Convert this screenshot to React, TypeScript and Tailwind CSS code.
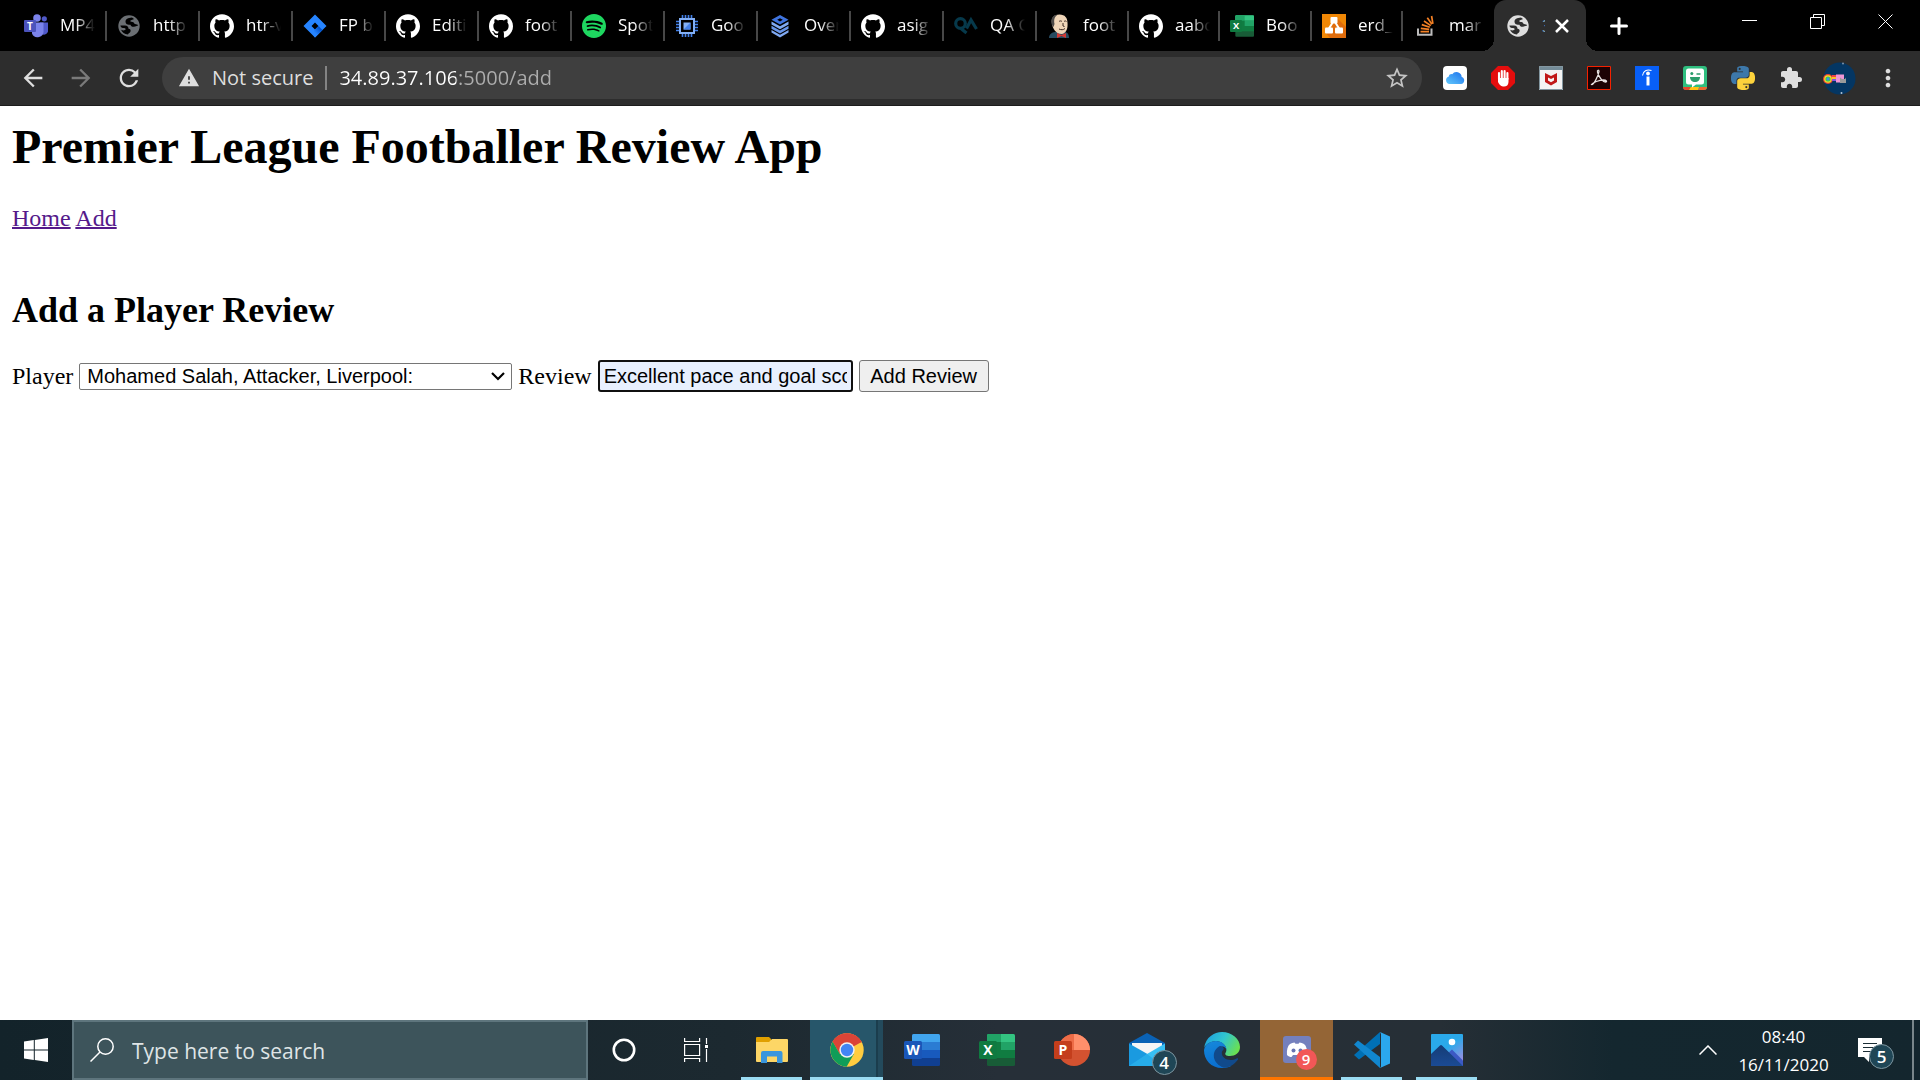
import type { ReactNode } from 'react';
import { SiGithub, SiSpotify } from 'react-icons/si';
import { MdArrowBack, MdArrowForward, MdExtension, MdMoreVert, MdRefresh, MdStarBorder, MdWarning } from 'react-icons/md';

/* ---------- favicons ---------- */

const Teams = () => (
  <svg viewBox="0 0 24 24" className="size-6">
    <circle cx="13" cy="4" r="3.8" fill="#7b83eb" />
    <circle cx="20.3" cy="4.8" r="2.6" fill="#5059c9" />
    <path d="M16 8.500h8v7a4 4 0 0 1-8 2z" fill="#5059c9" />
    <path d="M8 8.500h11.500v8a6 6 0 0 1-11.500 3z" fill="#7b83eb" />
    <rect y="6" width="12" height="12" rx="1" fill="#4b53bc" />
    <text x="6" y="15.500" textAnchor="middle" fontSize="10" fontWeight="700" fill="#fff" fontFamily="Open Sans, sans-serif">T</text>
  </svg>
);

const Jira = () => (
  <svg viewBox="0 0 24 24" className="size-6">
    <defs>
      <linearGradient id="jira" x1="0.9" y1="0.2" x2="0.4" y2="0.8">
        <stop offset="0.2" stopColor="#0052cc" />
        <stop offset="1" stopColor="#2684ff" />
      </linearGradient>
    </defs>
    <path d="M12 .5 23.500 12 12 23.500.5 12zM12 8.500 8.500 12l3.500 3.500 3.500-3.500z" fill="#2684ff" fillRule="evenodd" />
    <path d="M12 15.500 15.500 12l4 4L12 23.500c-2.500-3-2-6 0-8z" fill="url(#jira)" />
  </svg>
);

const Chip = () => (
  <svg viewBox="0 0 24 24" className="size-6" fill="none">
    <path d="M7.500 1v4M10.500 1v4M13.500 1v4M16.500 1v4M7.500 19v4M10.500 19v4M13.500 19v4M16.500 19v4M1 7.500h4M1 10.500h4M1 13.500h4M1 16.500h4M19 7.500h4M19 10.500h4M19 13.500h4M19 16.500h4" stroke="#4280ea" strokeWidth="1.600" />
    <rect x="5" y="5" width="14" height="14" stroke="#82aff5" strokeWidth="2" />
    <path d="M8.500 8.500h7v7h-7z" fill="#82aff5" />
    <path d="M15.500 8.500v7h-7z" fill="#4280ea" />
  </svg>
);

const Stack = () => (
  <svg viewBox="0 0 24 24" className="size-6">
    <path d="m12 1 8.500 4.700L12 10.500 3.500 5.700zM12 4.200 9.200 5.700 12 7.400l2.800-1.700z" fill="#3f74df" fillRule="evenodd" />
    <path d="m3.500 7.500 8.500 4.700 8.500-4.700v3L12 15.300l-8.500-4.800z" fill="#7fa9f3" />
    <path d="m3.500 11.800 8.500 4.700 8.500-4.700v3L12 19.600l-8.500-4.800z" fill="#6795ea" />
    <path d="m3.500 16 8.500 4.700L20.500 16v2.500L12 23.500l-8.500-5z" fill="#7fa9f3" />
  </svg>
);

const Qa = () => (
  <svg viewBox="0 0 24 24" className="size-6" fill="none" stroke="#06394b" strokeWidth="3.200">
    <circle cx="6.500" cy="9.500" r="4.800" />
    <path d="m7.500 15 5 4M12.500 14.500 17 6l5.500 9" />
  </svg>
);

const Jenkins = () => (
  <svg viewBox="0 0 24 24" className="size-6">
    <path d="M2 24c0-4 3-5.500 6-6l10 0c3 .5 4 3 4 6z" fill="#274b60" />
    <path d="M5 9C4 4 7 .5 12.500.5S20.500 4 20.500 9c.5 5-1 10-5.500 11C9 20 5.500 15 5 9z" fill="#efd5b8" />
    <path d="M5 11C2.500 5 6.500.5 11 .4 8 2 6.500 5 7.500 10l-1 3z" fill="#4d4a48" />
    <path d="M12 7.500c1-.8 2-.8 3 0M17 7.500c1-.7 2-.7 2.500 0M12 15c2 1 4.500 1 6-.5M16 9v3l1.500.5" stroke="#3c2a22" strokeWidth="1" fill="none" />
    <path d="m10 19 4.500 2L19 19v5l-4.500-2L10 24z" fill="#d33833" />
  </svg>
);

const Drawio = () => (
  <svg viewBox="0 0 24 24" className="size-6">
    <path d="M0 0h24v24H0z" fill="#f08705" />
    <path d="M15 4 24 13v11H8l-4-5z" fill="#df6c0c" />
    <path d="m11 8-5 8M13 8l5 8" stroke="#fff" strokeWidth="2" />
    <rect x="8.500" y="3" width="7" height="6.500" rx="1" fill="#fff" />
    <rect x="3" y="13.500" width="8" height="6" rx="1" fill="#fff" />
    <rect x="13" y="13.500" width="8" height="6" rx="1" fill="#fff" />
  </svg>
);

const StackOverflow = () => (
  <svg viewBox="0 0 24 24" className="size-6" fill="none">
    <path d="M5 14.500v6.300h13.500v-6.300" stroke="#bcbbbb" strokeWidth="2" />
    <path d="M7.500 17.700H16M7.800 14.300l8.400 1M8.800 10.600l8 2.600M11 7l6.800 4.600M14.300 3.700l4.600 6.500M18.600 2l1.300 7.800" stroke="#f48024" strokeWidth="1.700" />
  </svg>
);

const Globe = ({ light = false }: { light?: boolean }) => (
  <svg viewBox="0 0 24 24" className={light ? 'size-6 text-[#dedede]' : 'size-6 text-[#6b6f73]'}>
    <circle cx="12" cy="12" r="10.700" fill="currentColor" />
    <g fill={light ? '#2d2d2d' : '#000'}>
      <path d="M15 3.600c-4 .2-6.500 1.700-6.500 4.200 0 2 1.500 3 3.500 3h1.500c.5 1.700 1.500 2.200 3.500 2 1.500-.2 2.500-1 4.200-1.300-.3-1.300-2-1-3.200-1.500-1.200-.6-1-1.800-2.500-2-1.700-.2-2.700-.3-2-1.400.6-1 2.500-.8 3.500-1.700z" />
      <path d="M3.400 11.500H8c2.500 0 3.500 1.500 3.500 3.300 1.500.2 2.500 1 2 2.700-.5 1.500-2 1.500-2.500 3-3.500-.3-6-2-6.900-4.700 1.700.8 3.900 1 4.400-.2.500-1.300-1-1.600-2.500-1.600-1.500 0-2.400-1-2.600-2.500z" />
    </g>
  </svg>
);

const Office = ({ letter, className }: { letter: 'W' | 'X'; className: string }) => {
  const c =
    letter === 'W'
      ? ['#41a5ee', '#2b7cd3', '#185abd', '#103f91', '#1a56b8']
      : ['#33c481', '#21a366', '#107c41', '#185c37', '#0f7a40'];
  return (
    <svg viewBox="0 0 36 36" className={className}>
      <rect x="8" y="2" width="28" height="32" rx="1.500" fill={c[3]} />
      <path d="M8 3.500A1.500 1.500 0 0 1 9.500 2h25A1.500 1.500 0 0 1 36 3.500V10H8z" fill={c[0]} />
      <path d="M8 10h28v8H8z" fill={c[1]} />
      <path d="M8 18h28v8H8z" fill={c[2]} />
      {letter === 'X' && <path d="M8 3.500A1.500 1.500 0 0 1 9.500 2H22v8H8z" fill={c[1]} />}
      {letter === 'X' && <path d="M8 10h14v8H8z" fill={c[2]} />}
      <rect y="9" width="18" height="18" rx="1.500" fill={c[4]} />
      <text x="9" y="23" textAnchor="middle" fontSize="14" fontWeight="700" fill="#fff" fontFamily="Open Sans, sans-serif">{letter}</text>
    </svg>
  );
};

const gh = <SiGithub className="size-6 text-white" />;

const tabs: { title: string; icon: ReactNode; width: string }[] = [
  { title: 'MP4', icon: <Teams />, width: 'w-[93px]' },
  { title: 'http', icon: <Globe />, width: 'w-[93px]' },
  { title: 'htr-v', icon: gh, width: 'w-[93px]' },
  { title: 'FP b', icon: <Jira />, width: 'w-[93px]' },
  { title: 'Editi', icon: gh, width: 'w-[93px]' },
  { title: 'foot', icon: gh, width: 'w-[93px]' },
  { title: 'Spot', icon: <SiSpotify className="size-6 text-[#1ed760]" />, width: 'w-[93px]' },
  { title: 'Goo', icon: <Chip />, width: 'w-[93px]' },
  { title: 'Over', icon: <Stack />, width: 'w-[93px]' },
  { title: 'asig', icon: gh, width: 'w-[93px]' },
  { title: 'QA C', icon: <Qa />, width: 'w-[93px]' },
  { title: 'foot', icon: <Jenkins />, width: 'w-[92px]' },
  { title: 'aabc', icon: gh, width: 'w-[91px]' },
  { title: 'Boo', icon: <Office letter="X" className="size-6" />, width: 'w-[92px]' },
  { title: 'erd_', icon: <Drawio />, width: 'w-[91px]' },
  { title: 'mar', icon: <StackOverflow />, width: 'w-[91px]' },
];

function TabStrip() {
  return (
    <div className="flex h-[51px] bg-black pl-[14px] text-white">
      {tabs.map((t, i) => (
        <div key={i} className={`${t.width} flex h-[51px] items-center`}>
          <button className="flex h-full min-w-0 flex-1 items-center gap-3 pl-2.5">
            <span className="shrink-0">{t.icon}</span>
            <span className="w-[35px] overflow-hidden whitespace-nowrap pb-0.5 text-left text-[17px] leading-6 [mask-image:linear-gradient(to_right,black_45%,transparent)]">
              {t.title}
            </span>
          </button>
          <span className={i === tabs.length - 1 ? 'w-0.5' : 'h-[30px] w-0.5 bg-[#474747]'} />
        </div>
      ))}
      <div className="relative flex h-[51px] w-[92px] items-center rounded-t-xl bg-[#2d2d2d] pl-3">
        <span className="absolute -left-3 bottom-0 size-3 bg-[radial-gradient(circle_at_0_0,#000_12px,#2d2d2d_12px)]" />
        <span className="absolute -right-3 bottom-0 size-3 bg-[radial-gradient(circle_at_100%_0,#000_12px,#2d2d2d_12px)]" />
        <Globe light />
        <span className="ml-3 w-[3px] overflow-hidden text-[17px] leading-6 text-[#8ab0c8]">3</span>
        <button aria-label="Close tab" className="ml-[9px]">
          <svg viewBox="0 0 16 16" className="size-4" stroke="#fff" strokeWidth="2.500">
            <path d="m2 2 12 12M14 2 2 14" />
          </svg>
        </button>
      </div>
      <button aria-label="New tab" className="ml-6 flex items-center">
        <svg viewBox="0 0 18 18" className="size-[18px]" stroke="#fff" strokeWidth="3" strokeLinecap="round">
          <path d="M9 1.500v15M1.500 9h15" />
        </svg>
      </button>
      <div className="ml-auto flex h-[43px] pr-px">
        <button aria-label="Minimise" className="flex w-[68px] items-center justify-center">
          <svg viewBox="0 0 15 15" className="size-[15px]" stroke="#fff"><path d="M0 6.500h15" /></svg>
        </button>
        <button aria-label="Restore" className="flex w-[68px] items-center justify-center">
          <svg viewBox="0 0 15 15" className="size-[15px]" stroke="#fff" fill="none">
            <path d="M.5 3.500h11v11H.5zM3.500 3.500v-3h11v11h-3" />
          </svg>
        </button>
        <button aria-label="Close" className="flex w-[68px] items-center justify-center">
          <svg viewBox="0 0 15 15" className="size-[15px]" stroke="#fff"><path d="m.5.5 14 14M14.500.5l-14 14" /></svg>
        </button>
      </div>
    </div>
  );
}

/* ---------- extensions ---------- */

const extensions: { name: string; icon: ReactNode }[] = [
  {
    name: 'iCloud',
    icon: (
      <>
        <defs>
          <linearGradient id="cloud" x1="1" x2="0" y1="0" y2="1">
            <stop offset="0.2" stopColor="#2a83f0" />
            <stop offset="1" stopColor="#62c8fb" />
          </linearGradient>
        </defs>
        <rect width="24" height="24" rx="4" fill="#fff" />
        <path d="M6.500 18a3.700 3.700 0 0 1-.9-7.200 3 3 0 0 1 3.600-2.600 5.300 5.300 0 0 1 9.500 2.800 3.600 3.600 0 0 1-.7 7z" fill="url(#cloud)" />
      </>
    ),
  },
  {
    name: 'AdBlock',
    icon: (
      <>
        <path d="M7 0h10l7 7v10l-7 7H7l-7-7V7z" fill="#e40d0d" />
        <path d="M8 7v6M10.800 5v7M13.600 5v7M16.400 7v6" stroke="#fff" strokeWidth="2.100" strokeLinecap="round" />
        <path d="M7 12h10.500v4c0 3-2 4.500-4.500 4.500-3 0-4-1-6-4.500z" fill="#fff" />
      </>
    ),
  },
  {
    name: 'McAfee WebAdvisor',
    icon: (
      <>
        <path d="M0 0h24v24H0z" fill="#f4f4f4" />
        <path d="M0 0h24v4H0z" fill="#748c98" />
        <path d="M.5.5h23v23H.5z" fill="none" stroke="#8397a1" />
        <path d="m6 7 6 3 6-3v9l-6 3.500L6 16zm3 4.500v3l3 1.700 3-1.700v-3L12 13z" fill="#c01818" fillRule="evenodd" />
      </>
    ),
  },
  {
    name: 'Adobe Acrobat',
    icon: (
      <>
        <path d="M.5.5h23v23H.5z" fill="#1d0204" stroke="#f52100" />
        <path d="M4.500 18.500c2 1 7-9 7.500-13 0-2-2-1.500-1.500.5 1 4.500 5 10 8 10 2 0 1-2-2-2-4 0-11 2.500-12 4.500z" fill="none" stroke="#e8e0e0" strokeWidth="1.300" />
      </>
    ),
  },
  {
    name: 'Indeed',
    icon: (
      <>
        <path d="M0 0h24v24H0z" fill="#085ff7" />
        <path d="M13 10.500v9" stroke="#fff" strokeWidth="3" />
        <circle cx="13" cy="7.500" r="1.900" fill="#fff" />
        <path d="M7.500 9.500c.5-4.500 4.500-6.500 9-5" fill="none" stroke="#fff" strokeWidth="1.100" />
      </>
    ),
  },
  {
    name: 'Bitmoji',
    icon: (
      <>
        <rect width="24" height="24" rx="3" fill="#2fbe7f" />
        <path d="M0 21h8l-2 3H3a3 3 0 0 1-3-3z" fill="#e8452c" />
        <path d="M8 21h8l-1 3H6z" fill="#ffc20e" />
        <path d="M17 21h7a3 3 0 0 1-3 3h-6z" fill="#ea6a32" />
        <path d="M5.500 2.500h13a2.500 2.500 0 0 1 2.500 2.500v11a2.500 2.500 0 0 1-2.500 2.500H13l-4 3v-3H5.500A2.500 2.500 0 0 1 3 16V5a2.500 2.500 0 0 1 2.500-2.500z" fill="#fff" />
        <path d="M7 11h10c0 3-2 5-5 5s-5-2-5-5z" fill="#2a9d6c" />
        <circle cx="8.800" cy="7.500" r="1.500" fill="#2a9d6c" />
        <path d="M13.500 8h4" stroke="#2a9d6c" strokeWidth="1.500" />
      </>
    ),
  },
  {
    name: 'Python',
    icon: (
      <>
        <path fill="#3d78aa" fillRule="evenodd" d="M14.250.18l.9.2.73.26.59.3.45.32.34.34.25.34.16.33.1.3.04.26.02.2-.01.13V8.500l-.05.63-.13.55-.21.46-.26.38-.3.31-.33.25-.35.19-.35.14-.33.1-.3.07-.26.04-.21.02H8.770l-.69.05-.59.14-.5.22-.41.27-.33.32-.27.35-.2.36-.15.37-.1.35-.07.32-.04.27-.02.21v3.060H3.170l-.21-.03-.28-.07-.32-.12-.35-.18-.36-.26-.36-.36-.35-.46-.32-.59-.28-.73-.21-.88-.14-1.050-.05-1.230.06-1.220.16-1.040.24-.87.32-.71.36-.57.4-.44.42-.33.42-.24.4-.16.36-.1.32-.05.24-.01h.16l.06.01h8.160v-.83H6.180l-.01-2.750-.02-.37.05-.34.11-.31.17-.28.25-.26.31-.23.38-.2.44-.18.51-.15.58-.12.64-.1.71-.06.77-.04.84-.02 1.270.05zm-6.300 1.980l-.23.33-.08.41.08.41.23.34.33.22.41.09.41-.09.33-.22.23-.34.08-.41-.08-.41-.23-.33-.33-.22-.41-.09-.41.09z" />
        <path fill="#fdd33c" fillRule="evenodd" d="M21.040 6.110l.28.06.32.12.35.18.36.27.36.35.35.47.32.59.28.73.21.88.14 1.040.05 1.230-.06 1.230-.16 1.040-.24.86-.32.71-.36.57-.4.45-.42.33-.42.24-.4.16-.36.09-.32.05-.24.02-.16-.01h-8.220v.82h5.840l.01 2.760.02.36-.05.34-.11.31-.17.29-.25.25-.31.24-.38.2-.44.17-.51.15-.58.13-.64.09-.71.07-.77.04-.84.01-1.270-.04-1.070-.14-.9-.2-.73-.25-.59-.3-.45-.33-.34-.34-.25-.34-.16-.33-.1-.3-.04-.25-.02-.2.01-.13v-5.340l.05-.64.13-.54.21-.46.26-.38.3-.32.33-.24.35-.2.35-.14.33-.1.3-.06.26-.04.21-.02.13-.01h5.840l.69-.05.59-.14.5-.21.41-.28.33-.32.27-.35.2-.36.15-.36.1-.35.07-.32.04-.28.02-.21V6.070h2.090l.14.01zM14.570 20.360l-.23.33-.08.41.08.41.23.33.33.23.41.08.41-.08.33-.23.23-.33.08-.41-.08-.41-.23-.33-.33-.23-.41-.08-.41.08z" />
      </>
    ),
  },
];

function Toolbar() {
  return (
    <div className="flex h-[55px] items-center border-b border-[#1c1c1c] bg-[#2d2d2d] text-[#dedede]">
      <button aria-label="Back" className="ml-[19px]"><MdArrowBack className="size-7" /></button>
      <button aria-label="Forward" className="ml-5 text-[#7a7a7a]"><MdArrowForward className="size-7" /></button>
      <button aria-label="Reload" className="ml-5"><MdRefresh className="size-7" /></button>
      <div className="ml-[19px] flex h-[42px] min-w-0 flex-1 items-center rounded-full bg-[#3f3f3f] pl-4 pr-3 text-[20px]">
        <MdWarning className="size-[22px] shrink-0" />
        <span className="ml-3 whitespace-nowrap">Not secure</span>
        <span className="mx-3 h-6 w-0.5 bg-[#848484]" />
        <input
          aria-label="Address"
          defaultValue="34.89.37.106:5000/add"
          className="min-w-0 flex-1 bg-[linear-gradient(to_right,#fff_117px,#adadad_117px)] bg-clip-text text-transparent outline-none"
        />
        <button aria-label="Bookmark this page" className="text-[#c4c4c4]"><MdStarBorder className="size-[26px]" /></button>
      </div>
      <div className="ml-[21px] flex items-center gap-6">
        {extensions.map((e) => (
          <button key={e.name} aria-label={e.name}>
            <svg viewBox="0 0 24 24" className="size-6">{e.icon}</svg>
          </button>
        ))}
        <button aria-label="Extensions"><MdExtension className="size-6" /></button>
      </div>
      <button aria-label="Profile" className="ml-5">
        <svg viewBox="0 0 33 33" className="size-[33px]">
          <circle cx="16.500" cy="16.500" r="16" fill="#043663" />
          <circle cx="5" cy="17" r="5" fill="#e9452f" />
          <circle cx="5" cy="17" r="3.800" fill="#f8dc2c" />
          <circle cx="5" cy="17" r="2.600" fill="#3ecb52" />
          <circle cx="5" cy="17" r="1.400" fill="#3d8cf0" />
          <path d="M9 13h5v2H9z" fill="#f04444" />
          <path d="M9 15h5v2H9z" fill="#f5c22c" />
          <path d="M9 17h5v2H9z" fill="#8a4fe0" />
          <rect x="13" y="12.500" width="8" height="8" fill="#f095d6" />
          <path d="M17 15.500 19 17h3l1-1.500V21h-6z" fill="#9a9a9a" />
          <circle cx="20" cy="1.500" r="1" fill="#7b93ad" />
          <circle cx="18.500" cy="31" r="1" fill="#b3c4d4" />
        </svg>
      </button>
      <button aria-label="Menu" className="mx-[18px]"><MdMoreVert className="size-7" /></button>
    </div>
  );
}

/* ---------- web page ---------- */

function Page() {
  return (
    <main className="flex-1 bg-white px-3 pt-[13px] font-['Liberation_Serif',serif] text-[24px] leading-[27px] text-black">
      <h1 className="text-[48px] font-bold leading-[55px]">Premier League Footballer Review App</h1>
      <nav className="mt-[31px] text-[#551a8b]">
        <a href="#home" className="underline decoration-2">Home</a>{' '}
        <a href="#add" className="underline decoration-2">Add</a>
      </nav>
      <h2 className="mt-[58px] text-[36px] font-bold leading-[41px]">Add a Player Review</h2>
      <form className="mt-[29px] flex flex-wrap items-center gap-[6px]" onSubmit={(e) => e.preventDefault()}>
        <label htmlFor="player">Player</label>
        <div className="relative flex w-[433px] items-center">
          <select
            id="player"
            className="h-[27px] w-full appearance-none rounded-[2px] border border-[#767676] bg-white pl-[7px] font-['Liberation_Sans',sans-serif] text-[20px] leading-[23px] outline-none"
          >
            <option>Mohamed Salah, Attacker, Liverpool:</option>
          </select>
          <svg viewBox="0 0 14 9" className="pointer-events-none absolute right-[7px] h-[9px] w-[14px]" fill="none" stroke="#000" strokeWidth="2.200">
            <path d="m1 1 6 6 6-6" />
          </svg>
        </div>
        <label htmlFor="review">Review</label>
        <input
          id="review"
          defaultValue="Excellent pace and goal scorer"
          className="h-8 w-[255px] rounded-[3px] border-2 border-[#101010] bg-[#e8f0fe] px-1 font-['Liberation_Sans',sans-serif] text-[20px] leading-[23px] outline-none"
        />
        <button className="h-8 w-[130px] rounded-[3px] border border-[#767676] bg-[#efefef] font-['Liberation_Sans',sans-serif] text-[20px] leading-[23px]">
          Add Review
        </button>
      </form>
    </main>
  );
}

/* ---------- taskbar ---------- */

const Explorer = () => (
  <svg viewBox="0 0 36 36" className="size-9">
    <path d="M2 6a1 1 0 0 1 1-1h12l2 2v6H2z" fill="#e0a000" />
    <path d="M2 10h13l3-3h15a1 1 0 0 1 1 1v21a1 1 0 0 1-1 1H3a1 1 0 0 1-1-1z" fill="#fdd666" />
    <path d="M7 31V21a2 2 0 0 1 2-2h17.500a2 2 0 0 1 2 2v10H23v-6.500H13V31z" fill="#3a96dd" />
  </svg>
);

const Chrome = () => (
  <svg viewBox="0 0 34 34" className="size-[34px]">
    <circle cx="17" cy="17" r="16.700" fill="#ffcd40" />
    <path d="M17 17 31.600 9A16.700 16.700 0 0 0 2.700 8.500L9.800 21z" fill="#db4437" />
    <path d="M17 17 23.900 21 16.600 33.700A16.700 16.700 0 0 1 2.700 8.500L9.800 21z" fill="#0f9d58" />
    <path d="M17 9.300h14.900A16.700 16.700 0 0 0 2.700 8.500l7.500 12z" fill="#db4437" />
    <circle cx="17" cy="17" r="7.700" fill="#f1f1f1" />
    <circle cx="17" cy="17" r="6.200" fill="#4285f4" />
  </svg>
);

const PowerPoint = () => (
  <svg viewBox="0 0 36 36" className="size-9">
    <circle cx="20" cy="18" r="16" fill="#d35230" />
    <path d="M20 2a16 16 0 0 0-16 16h16z" fill="#ed6c47" />
    <path d="M20 2a16 16 0 0 1 16 16H20z" fill="#ff8f6b" />
    <rect y="9" width="18" height="18" rx="1.500" fill="#c43e1c" />
    <text x="9" y="23" textAnchor="middle" fontSize="14" fontWeight="700" fill="#fff" fontFamily="Open Sans, sans-serif">P</text>
  </svg>
);

const Mail = () => (
  <svg viewBox="0 0 36 36" className="size-9">
    <path d="M0 11 18 1l18 10v3H0z" fill="#0a62b5" />
    <path d="M3 11h30v12H3z" fill="#f5f5f5" />
    <path d="M0 11.500v22.500h34l2-2z" fill="#1a9ae0" />
    <path d="M36 11.500v22.500H4l14-12z" fill="#38c0f4" />
    <path d="M0 34 18 22l16 12z" fill="#26ace9" />
  </svg>
);

const Edge = () => (
  <svg viewBox="0 0 36 36" className="size-9">
    <defs>
      <linearGradient id="edgeTop" x1="0" x2="1" y1="0.2" y2="0.6">
        <stop offset="0" stopColor="#1d9fe0" />
        <stop offset="0.5" stopColor="#31c6cf" />
        <stop offset="1" stopColor="#6be04f" />
      </linearGradient>
      <linearGradient id="edgeLeft" x1="0" x2="0.3" y1="0" y2="1">
        <stop offset="0" stopColor="#1689db" />
        <stop offset="1" stopColor="#0a6fd0" />
      </linearGradient>
    </defs>
    <path d="M0 16C2 5 10 0 18 0c10 0 18 7 18 15 0 6-5 9-10 9-4 0-6-1.500-4-4 1.500-3-1-10-9-11C7 9 2 12 0 16z" fill="url(#edgeTop)" />
    <path d="M0 18C1 12 7 9 12 9c6 0 10.500 4 10.500 9-1-4-5.500-5-7.500-1-3 7 2 15 12 17-2.500 1.500-6 2-9 2C7 36 0 28 0 18z" fill="url(#edgeLeft)" />
    <path d="M15 14.500c-8 5-7 17 5 21.300 6-.3 11-4 14-8.300.5-1-.5-1.500-1.500-1C26 30 18 27 17.800 21c0-2 1.200-3 2.200-4-1-2.500-3-3.500-5-2.500z" fill="#114a8b" />
  </svg>
);

const Discord = () => (
  <svg viewBox="0 0 28 28" className="size-7">
    <rect width="28" height="27" rx="3" fill="#7480bd" />
    <path d="M4 19c-.5-5 .5-9 3-11 1.500-1 3-1.500 4.500-1.500l1 1.200h3l1-1.200c1.500 0 3 .5 4.500 1.500 2.500 2 3.500 6 3 11-1.500 1.500-3 2-4.500 2l-1.500-2h-8l-1.500 2C7 21 5.500 20.500 4 19z" fill="#fff" />
    <circle cx="10.500" cy="14.500" r="2" fill="#6673b3" />
    <circle cx="17.500" cy="14.500" r="2" fill="#6673b3" />
  </svg>
);

const VsCode = () => (
  <svg viewBox="0 0 36 36" className="size-9">
    <path d="M26 0v12L5 27.500 0 23z" fill="#0070b5" />
    <path d="m4 8.500-4 4L26 36V25z" fill="#1187cf" />
    <path d="m26 0 10 4.500v27L26 36l1-1.500V2z" fill="#2ba8ee" />
  </svg>
);

const Photos = () => (
  <svg viewBox="0 0 32 32" className="size-8">
    <defs>
      <linearGradient id="photoSky" x1="0.300" x2="1" y1="0" y2="0.900">
        <stop offset="0.400" stopColor="#2aa9ea" />
        <stop offset="1" stopColor="#a98be0" />
      </linearGradient>
      <linearGradient id="photoHill" x1="0" x2="0" y1="0" y2="1">
        <stop offset="0" stopColor="#153c76" />
        <stop offset="1" stopColor="#1b4b94" />
      </linearGradient>
    </defs>
    <rect width="32" height="32" rx="1" fill="url(#photoSky)" />
    <path d="m14 22 7-6.500 11 11V32H14z" fill="#3c59c4" />
    <path d="M0 20 9 11.500q1-1 2 0L32 32H0z" fill="url(#photoHill)" />
    <circle cx="21" cy="8" r="3.300" fill="#fff" />
  </svg>
);

type App = { name: string; icon: ReactNode; line?: string; bg?: string; badge?: ReactNode };

const Badge = ({ n }: { n: string }) => (
  <span className="absolute -bottom-[7px] -right-3 flex size-[25px] items-center justify-center rounded-full border border-[#7d959f] bg-[#1f4656] text-[17px] font-semibold leading-none text-white">
    {n}
  </span>
);

const apps: App[] = [
  { name: 'File Explorer', icon: <Explorer />, line: 'w-[61px] bg-[#9adcf3]' },
  { name: 'Google Chrome', icon: <Chrome />, line: 'w-full bg-[#9adcf3]', bg: 'bg-[linear-gradient(to_right,#27566a_66px,#1b3d4d_66px,#1b3d4d_68px,#234a5c_68px)]' },
  { name: 'Word', icon: <Office letter="W" className="size-9" /> },
  { name: 'Excel', icon: <Office letter="X" className="size-9" /> },
  { name: 'PowerPoint', icon: <PowerPoint /> },
  { name: 'Mail', icon: <Mail />, badge: <Badge n="4" /> },
  { name: 'Edge', icon: <Edge /> },
  {
    name: 'Discord',
    icon: <Discord />,
    line: 'w-full bg-[#ff7500]',
    bg: 'bg-[#946536]',
    badge: (
      <span className="absolute -bottom-1.5 -right-1.5 flex size-[21px] items-center justify-center rounded-full bg-[#f25757] text-[15px] font-semibold leading-none text-white">
        9
      </span>
    ),
  },
  { name: 'Visual Studio Code', icon: <VsCode />, line: 'w-[61px] bg-[#9adcf3]' },
  { name: 'Photos', icon: <Photos />, line: 'w-[61px] bg-[#9adcf3]' },
];

function Taskbar() {
  return (
    <footer className="flex h-[60px] bg-[linear-gradient(to_right,#13232a,#1c2930_38%,#262f38_52%,#262f36_75%,#14272f_84%,#14262e)] text-white">
      <button aria-label="Start" className="flex w-[72px] items-center justify-center">
        <svg viewBox="0 0 24 24" className="size-6" fill="#fff">
          <path d="M0 3.400 9.800 2v9.500H0zM10.800 1.900 24 0v11.500H10.800zM0 12.500h9.800V22L0 20.600zM10.800 12.500H24V24l-13.200-1.900z" />
        </svg>
      </button>
      <div className="flex w-[516px] items-center border-2 border-[#5e757d] bg-[#3d545b] pl-4">
        <svg viewBox="0 0 24 24" className="size-6 shrink-0" fill="none" stroke="#fff" strokeWidth="1.500">
          <circle cx="15.500" cy="8.500" r="7.700" />
          <path d="M10 14 .5 23.500" />
        </svg>
        <input
          aria-label="Search"
          placeholder="Type here to search"
          className="ml-[18px] min-w-0 flex-1 bg-transparent pt-0.5 text-[21px] leading-7 outline-none placeholder:text-[#dfe4e6]"
        />
      </div>
      <button aria-label="Cortana" className="flex w-[72px] items-center justify-center">
        <svg viewBox="0 0 24 24" className="size-6" fill="none" stroke="#fff" strokeWidth="2.600">
          <circle cx="12" cy="12" r="10.200" />
        </svg>
      </button>
      <button aria-label="Task view" className="mr-[3px] flex w-[72px] items-center justify-center">
        <svg viewBox="0 0 24 24" className="size-6" fill="none" stroke="#fff" strokeWidth="1.200">
          <path d="M.6 6.500h15v11H.6zM.6 0v3.500h15V0M.6 24v-3.500h15V24M22.500 0v6M22.500 11v13" />
          <path d="M21 7h3v3h-3z" fill="#fff" stroke="none" />
        </svg>
      </button>
      {apps.map((a) => (
        <button key={a.name} aria-label={a.name} className="w-[75px] pr-0.5">
          <span className={`${a.bg ?? ''} flex h-full flex-col items-center`}>
            <span className="flex h-[60px] items-center pb-px">
              <span className="relative">
                {a.icon}
                {a.badge}
              </span>
            </span>
            {a.line && <span className={`${a.line} -mt-[3px] h-[3px]`} />}
          </span>
        </button>
      ))}
      <div className="ml-auto flex items-center">
        <button aria-label="Show hidden icons" className="mr-5 flex items-center">
          <svg viewBox="0 0 18 10" className="h-[10px] w-[18px]" fill="none" stroke="#fff" strokeWidth="1.500">
            <path d="m.5 9.500 8.500-8.500 8.500 8.500" />
          </svg>
        </button>
        <div className="mr-7 w-[93px] whitespace-nowrap pt-px text-center text-[17px] leading-7">
          <div>08:40</div>
          <div>16/11/2020</div>
        </div>
        <button aria-label="Notifications" className="relative mr-[30px]">
          <svg viewBox="0 0 24 24" className="size-6">
            <path d="M0 0h24v19H11v5l-5-5H0z" fill="#fff" />
            <path d="M5 5.500h14M5 9.500h14M5 13.500h9" stroke="#1b2d35" strokeWidth="1.200" />
          </svg>
          <Badge n="5" />
        </button>
        <button aria-label="Show desktop" className="h-[60px] w-2 border-l-2 border-[#7a868b]" />
      </div>
    </footer>
  );
}

export default function App() {
  return (
    <div className="flex min-h-screen flex-col font-['Open_Sans','Noto_Sans',sans-serif]">
      <TabStrip />
      <Toolbar />
      <Page />
      <Taskbar />
    </div>
  );
}
